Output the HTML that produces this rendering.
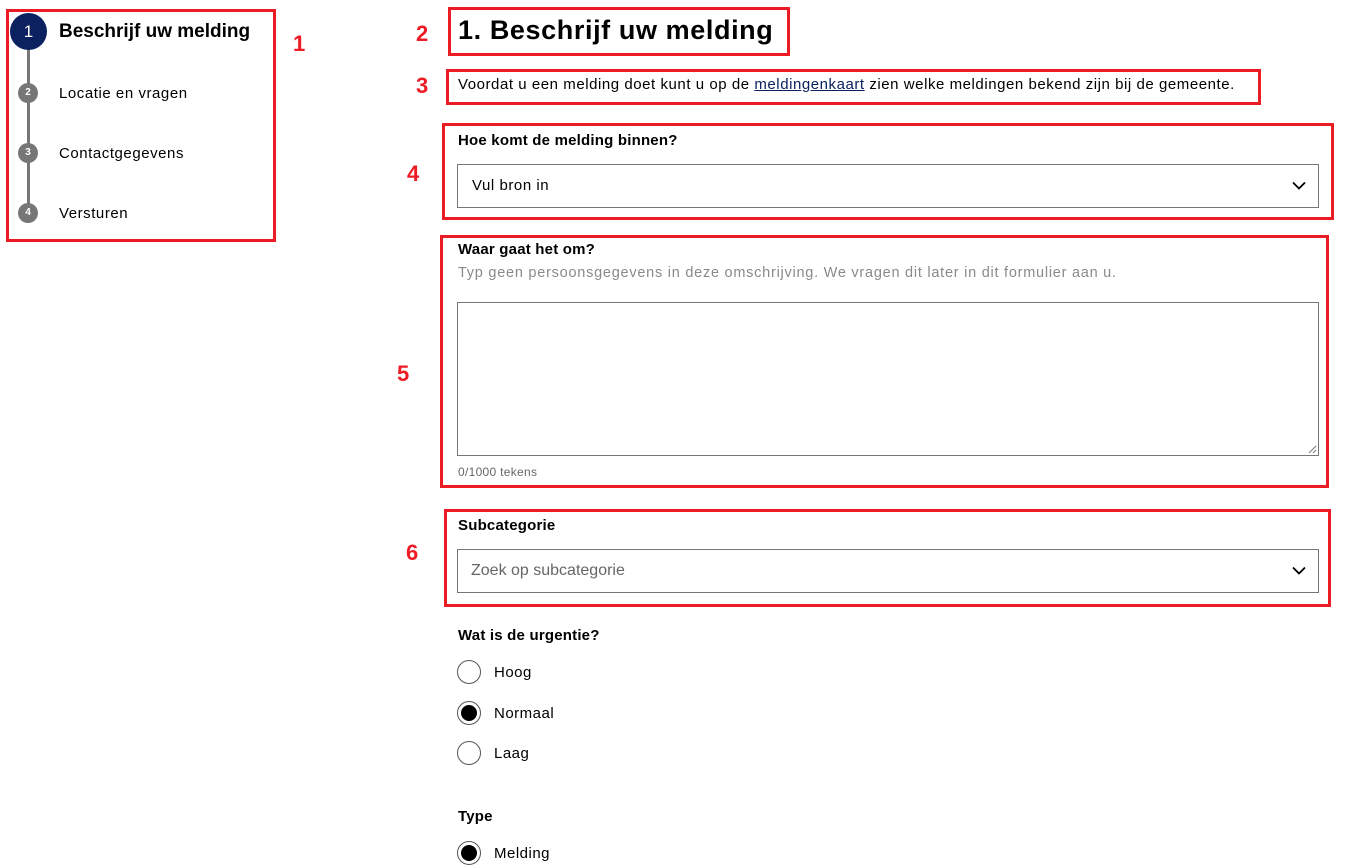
<!DOCTYPE html>
<html><head><meta charset="utf-8"><style>
*{margin:0;padding:0;box-sizing:border-box}
body{width:1347px;height:856px;background:#fff;position:relative;overflow:hidden;font-family:"Liberation Sans",sans-serif;color:#000}
.a{position:absolute}
.rb{position:absolute;border:3px solid #ed1c24}
.rn{position:absolute;color:#ed1c24;font-weight:bold;font-size:22px;line-height:1}
.lbl{position:absolute;font-weight:bold;font-size:15px;letter-spacing:0.2px}
.box{position:absolute;border:1px solid #767676;background:#fff}
.chev{position:absolute;right:12px;top:50%;margin-top:-5px}
.radio{position:absolute;width:24px;height:24px;border:1px solid #555;border-radius:50%;background:#fff}
.radio.on::after{content:"";position:absolute;left:3px;top:3px;width:16px;height:16px;border-radius:50%;background:#000}
.rl{position:absolute;font-size:15px;letter-spacing:0.5px}
.t{letter-spacing:0.55px}
</style></head><body>
<div class="a" style="left:27px;top:40px;width:3px;height:173px;background:#767676"></div>
<div class="a" style="left:10px;top:13px;width:37px;height:37px;border-radius:50%;background:#0b2160;color:#fff;font-size:17px;text-align:center;line-height:37px">1</div>
<div class="a" style="left:59px;top:21px;font-size:19px;font-weight:bold">Beschrijf uw melding</div>
<div class="a" style="left:18px;top:83px;width:20px;height:20px;border-radius:50%;background:#767676;color:#fff;font-size:10px;font-weight:bold;text-align:center;line-height:20px">2</div>
<div class="a t" style="left:59px;top:85px;font-size:15px">Locatie en vragen</div>
<div class="a" style="left:18px;top:143px;width:20px;height:20px;border-radius:50%;background:#767676;color:#fff;font-size:10px;font-weight:bold;text-align:center;line-height:20px">3</div>
<div class="a t" style="left:59px;top:145px;font-size:15px">Contactgegevens</div>
<div class="a" style="left:18px;top:203px;width:20px;height:20px;border-radius:50%;background:#767676;color:#fff;font-size:10px;font-weight:bold;text-align:center;line-height:20px">4</div>
<div class="a t" style="left:59px;top:205px;font-size:15px">Versturen</div>
<div class="rb" style="left:6px;top:9px;width:270px;height:233px"></div>
<div class="rn" style="left:293px;top:33px">1</div>

<div class="a" style="left:458px;top:15px;font-size:27px;font-weight:bold;letter-spacing:0.6px">1. Beschrijf uw melding</div>
<div class="rb" style="left:448px;top:7px;width:342px;height:49px"></div>
<div class="rn" style="left:416px;top:23px">2</div>

<div class="a t" style="left:458px;top:76px;font-size:15px">Voordat u een melding doet kunt u op de <span style="color:#0b2160;text-decoration:underline">meldingenkaart</span> zien welke meldingen bekend zijn bij de gemeente.</div>
<div class="rb" style="left:446px;top:69px;width:815px;height:36px"></div>
<div class="rn" style="left:416px;top:75px">3</div>

<div class="lbl" style="left:458px;top:132px">Hoe komt de melding binnen?</div>
<div class="box" style="left:457px;top:164px;width:862px;height:44px"><span class="a t" style="left:14px;top:12px;font-size:15px">Vul bron in</span>
<svg class="chev" width="14" height="9" viewBox="0 0 14 9"><path d="M1 1.5l6 6 6-6" fill="none" stroke="#000" stroke-width="1.8"/></svg></div>
<div class="rb" style="left:442px;top:123px;width:892px;height:97px"></div>
<div class="rn" style="left:407px;top:163px">4</div>

<div class="lbl" style="left:458px;top:241px">Waar gaat het om?</div>
<div class="a" style="left:458px;top:265px;font-size:14.5px;color:#8a8a8a;letter-spacing:0.75px">Typ geen persoonsgegevens in deze omschrijving. We vragen dit later in dit formulier aan u.</div>
<div class="box" style="left:457px;top:302px;width:862px;height:154px">
<svg class="a" style="right:1px;bottom:1px" width="9" height="9"><path d="M8 1L1 8M8 5L5 8" stroke="#777" stroke-width="1"/></svg></div>
<div class="a" style="left:458px;top:465px;font-size:12px;color:#666;letter-spacing:0.3px">0/1000 tekens</div>
<div class="rb" style="left:440px;top:235px;width:889px;height:253px"></div>
<div class="rn" style="left:397px;top:363px">5</div>

<div class="lbl" style="left:458px;top:517px">Subcategorie</div>
<div class="box" style="left:457px;top:549px;width:862px;height:44px"><span class="a" style="left:13px;top:12px;font-size:16px;color:#666">Zoek op subcategorie</span>
<svg class="chev" width="14" height="9" viewBox="0 0 14 9"><path d="M1 1.5l6 6 6-6" fill="none" stroke="#000" stroke-width="1.8"/></svg></div>
<div class="rb" style="left:444px;top:509px;width:887px;height:98px"></div>
<div class="rn" style="left:406px;top:542px">6</div>

<div class="lbl" style="left:458px;top:627px">Wat is de urgentie?</div>
<div class="radio" style="left:457px;top:660px"></div><div class="rl" style="left:494px;top:664px">Hoog</div>
<div class="radio on" style="left:457px;top:701px"></div><div class="rl" style="left:494px;top:705px">Normaal</div>
<div class="radio" style="left:457px;top:741px"></div><div class="rl" style="left:494px;top:745px">Laag</div>

<div class="lbl" style="left:458px;top:808px">Type</div>
<div class="radio on" style="left:457px;top:841px"></div><div class="rl" style="left:494px;top:845px">Melding</div>
</body></html>
